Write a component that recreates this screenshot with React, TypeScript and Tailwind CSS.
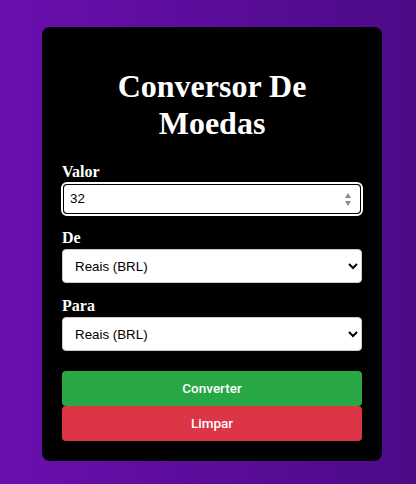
import React, { useState } from 'react';

const moedas = ['Reais (BRL)', 'Dólar (USD)', 'Euro (EUR)'];

const App = () => {
  const [valor, setValor] = useState('32');
  const [de, setDe] = useState(moedas[0]);
  const [para, setPara] = useState(moedas[0]);

  return (
    <div className="min-h-screen flex justify-center items-start pt-[27px] pl-2 bg-linear-to-r from-[#6a0fae] to-[#4c0a88]">
      <div className="w-[340px] bg-black rounded-lg p-5 text-white">
        <h1 className="text-center text-[32px] leading-[37px] font-bold my-[21px] font-['Liberation_Serif',serif]">
          Conversor De Moedas
        </h1>

        <div className="flex flex-col font-['Liberation_Sans',Arial,sans-serif] text-[13.33px] text-black">
          <label className="text-white font-bold text-base leading-[18px] font-['Liberation_Serif',serif]">Valor</label>
          <div className="mt-[1px] w-[302px] -ml-px h-[34px] rounded-[6px] border-2 border-white">
            <div className="h-full flex items-center rounded-[4px] border border-black bg-white pl-[6px] pr-[9px]">
              <input
                value={valor}
                onChange={(e) => setValor(e.target.value)}
                className="flex-1 outline-none bg-transparent"
              />
              <svg width="6" height="13" viewBox="0 0 6 13">
                <path d="M3 0L6 5H0Z" fill="#8a8a8a" />
                <path d="M3 13L6 8H0Z" fill="#8a8a8a" />
              </svg>
            </div>
          </div>

          <label className="mt-[13px] text-white font-bold text-base leading-[18px] font-['Liberation_Serif',serif]">De</label>
          <select
            value={de}
            onChange={(e) => setDe(e.target.value)}
            className="mt-[2px] h-[34px] w-full bg-white border border-[#ccc] rounded-[4px] pl-2 pr-1"
          >
            {moedas.map((m) => (
              <option key={m}>{m}</option>
            ))}
          </select>

          <label className="mt-[14px] text-white font-bold text-base leading-[18px] font-['Liberation_Serif',serif]">Para</label>
          <select
            value={para}
            onChange={(e) => setPara(e.target.value)}
            className="mt-[2px] h-[34px] w-full bg-white border border-[#ccc] rounded-[4px] pl-2 pr-1"
          >
            {moedas.map((m) => (
              <option key={m}>{m}</option>
            ))}
          </select>

          <button className="mt-5 h-[35px] w-full rounded-[4px] bg-[#28a745] text-white font-medium text-[13.5px] font-['Roboto',Arial,sans-serif]">
            Converter
          </button>
          <button
            className="h-[35px] w-full rounded-[4px] bg-[#dc3545] text-white font-medium text-[13.5px] font-['Roboto',Arial,sans-serif]"
            onClick={() => setValor('')}
          >
            Limpar
          </button>
        </div>
      </div>
    </div>
  );
};

export default App;
